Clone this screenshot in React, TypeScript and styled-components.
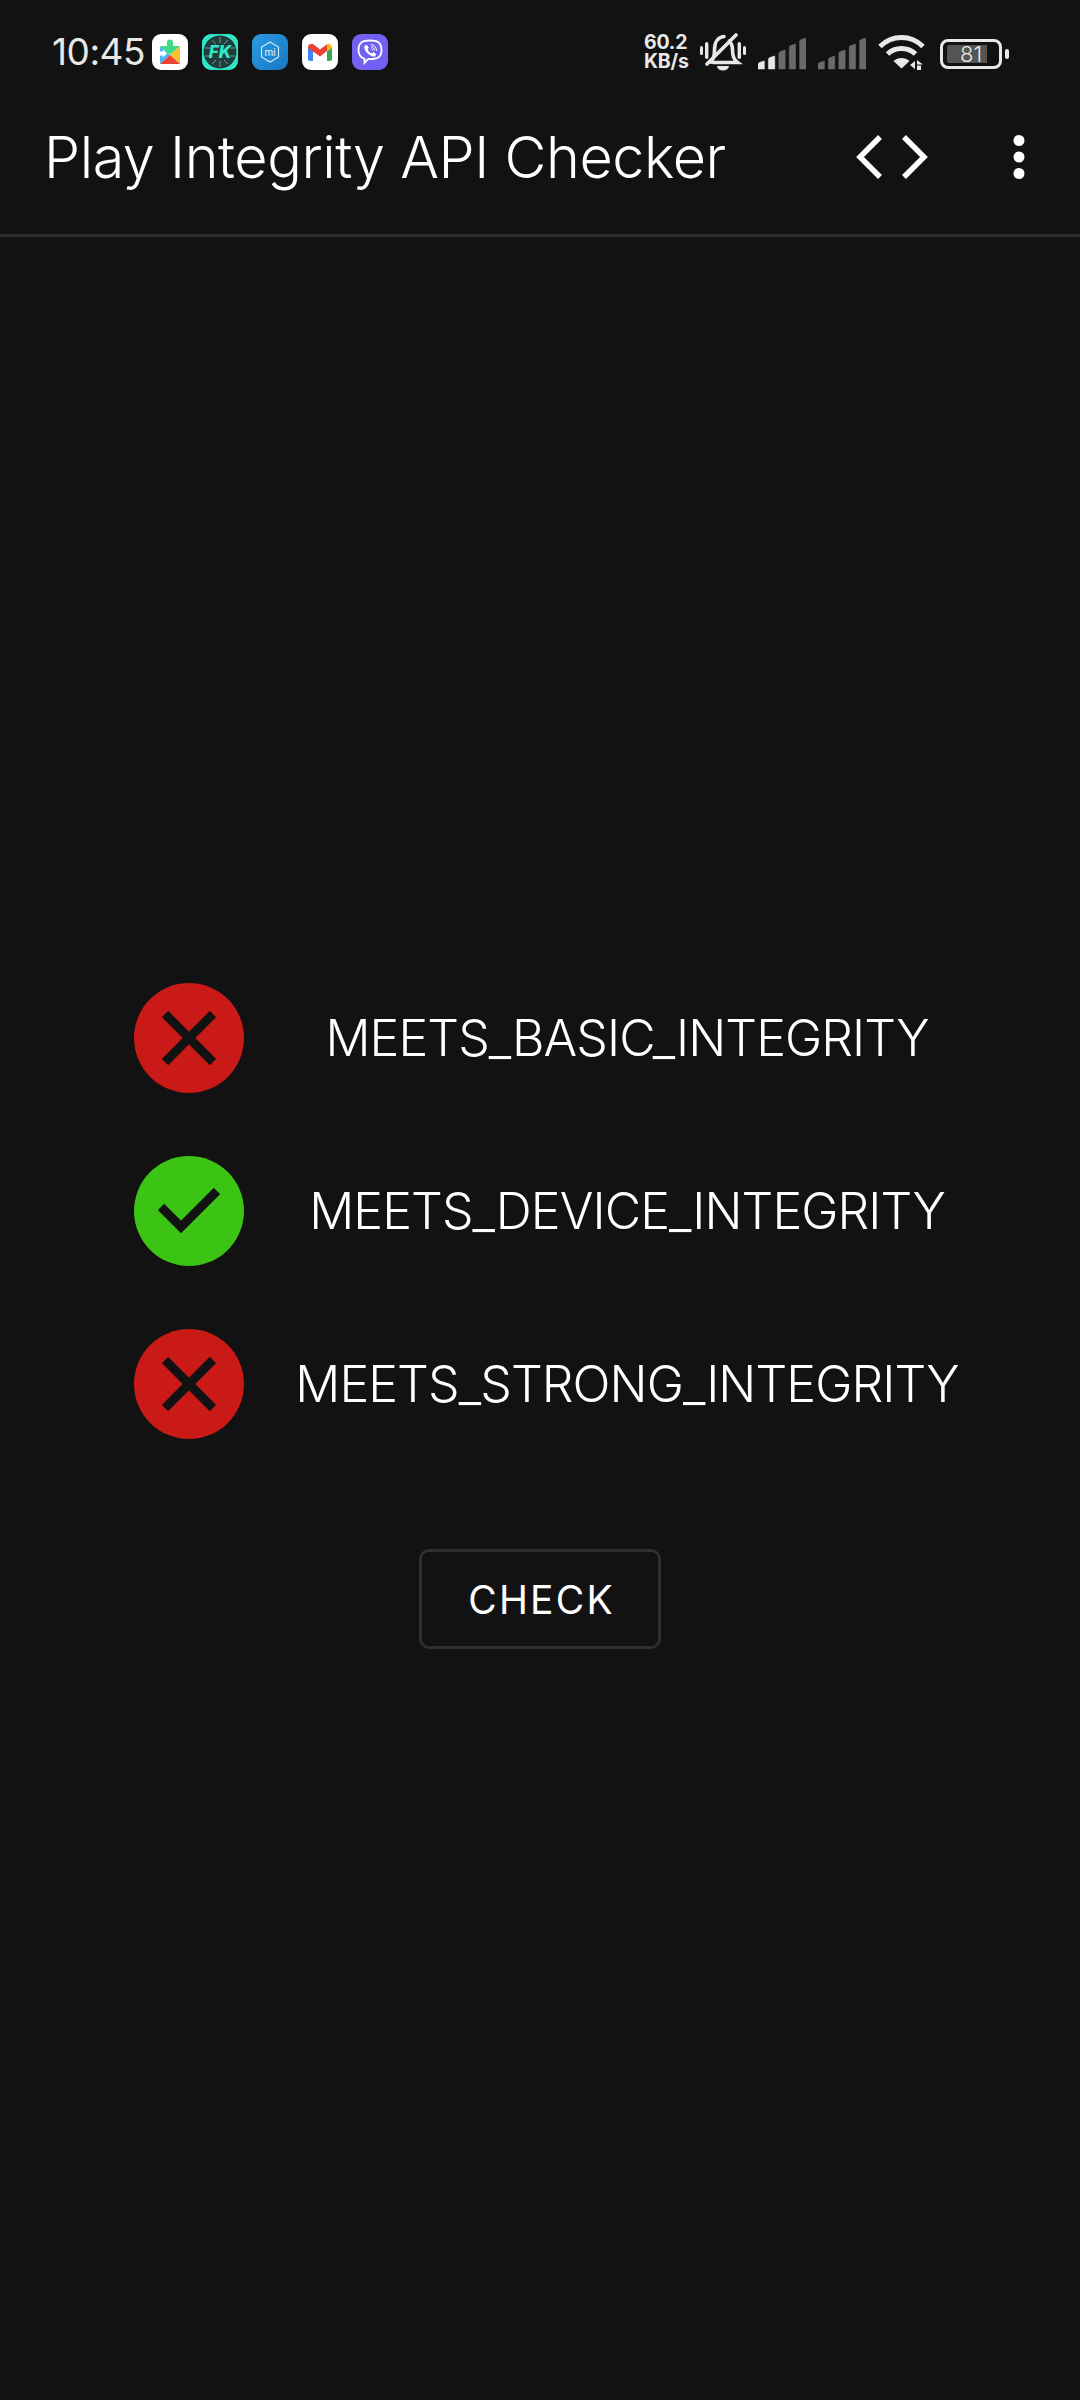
import React from 'react';
import styled, { createGlobalStyle } from 'styled-components';

const GlobalStyle = createGlobalStyle`
  html, body {
    margin: 0;
    padding: 0;
    background: #121212;
  }
  * { box-sizing: border-box; }
`;

const Screen = styled.div`
  width: 1080px;
  height: 2400px;
  background: #121212;
  color: #fff;
  font-family: Inter, "Noto Sans", sans-serif;
  overflow: hidden;
`;

const StatusBar = styled.div`
  height: 104px;
  padding: 32px 71px 0 52px;
  display: flex;
  align-items: flex-start;
  justify-content: space-between;
`;

const StatusGroup = styled.div`
  display: flex;
  align-items: center;
  height: 40px;
`;

const Clock = styled.span`
  font-size: 37px;
  line-height: 40px;
  color: #e8e8e8;
  margin-right: 7px;
  letter-spacing: -0.5px;
`;

const AppBadges = styled.div`
  display: flex;
  gap: 14px;
`;

const Badge = styled.div<{ $bg: string }>`
  width: 36px;
  height: 36px;
  border-radius: 9px;
  background: ${p => p.$bg};
  overflow: hidden;
  svg { display: block; }
`;

const NetSpeed = styled.div`
  width: 56px;
  font-size: 19.5px;
  line-height: 19px;
  font-weight: 700;
  letter-spacing: -0.2px;
  color: #e8e8e8;
  text-align: left;
`;

const Toolbar = styled.div`
  height: 133px;
  padding: 0 55px 24px 44px;
  display: flex;
  align-items: center;
  justify-content: space-between;
  border-bottom: 3px solid #2e2e2e;
`;

const Title = styled.h1`
  margin: 0;
  font-size: 57.5px;
  font-weight: 300;
  line-height: 70px;
  letter-spacing: -0.45px;
`;

const ToolbarActions = styled.div`
  display: flex;
  align-items: center;
  gap: 85px;
`;

const Content = styled.div`
  padding-top: 746px;
  display: flex;
  flex-direction: column;
  align-items: center;
`;

const CheckList = styled.div`
  width: 812px;
  display: flex;
  flex-direction: column;
  gap: 63px;
`;

const CheckRow = styled.div`
  display: flex;
  align-items: center;
  height: 110px;
`;

const StatusDot = styled.div<{ $ok: boolean }>`
  width: 110px;
  height: 110px;
  flex: none;
  border-radius: 50%;
  background: ${p => (p.$ok ? '#3cc415' : '#c91a17')};
  display: flex;
  align-items: center;
  justify-content: center;
`;

const CheckLabel = styled.div`
  flex: 1;
  min-width: 0;
  display: flex;
  justify-content: center;
  font-size: 50px;
  font-weight: 300;
  letter-spacing: -0.9px;
  white-space: nowrap;
  margin-left: 64px;
`;

const CheckButton = styled.button`
  margin-top: 110px;
  width: 242px;
  height: 100px;
  background: transparent;
  border: 3px solid #2f2f2f;
  border-radius: 10px;
  color: #fff;
  font-family: inherit;
  font-size: 39px;
  font-weight: 400;
  letter-spacing: 2.2px;
  padding: 0 0 0 3px;
`;

const CrossIcon = () => (
  <svg width="54" height="54" viewBox="0 0 54 54">
    <path d="M3 3 L51 51 M51 3 L3 51" stroke="#121212" strokeWidth="9" fill="none" />
  </svg>
);

const TickIcon = () => (
  <svg width="62" height="46" viewBox="0 0 62 46">
    <path d="M3 19 L23 39 L59 3" stroke="#121212" strokeWidth="9" fill="none" />
  </svg>
);

const PlayServicesBadge = () => (
  <Badge $bg="#fff">
    <svg width="36" height="36" viewBox="0 0 36 36">
      <path d="M8 12 L18 21 L8 30 Z" fill="#4db6f5" />
      <path d="M8 12 H15 V8.5 A3 3 0 0 1 21 8.5 V12 H28 L18 21 Z" fill="#3ddc84" />
      <path d="M28 12 V30 L18 21 Z" fill="#fbc02d" />
      <path d="M8 30 H28 L18 21 Z" fill="#ea4335" />
      <path d="M8 17.5 H11 V15.5 L15 19.5 L11 23.5 V21.5 H8 Z" fill="#fff" />
    </svg>
  </Badge>
);

const KernelBadge = () => (
  <Badge $bg="#2fe8c8">
    <svg width="36" height="36" viewBox="0 0 36 36">
      <circle cx="18" cy="18" r="16.5" fill="#1f3d3a" />
      <path
        d="M10 6 L14 10 M26 6 L22 10 M10 30 L14 26 M26 30 L22 26 M18 3 V9 M18 27 V33 M3 14 H8 M3 22 H8 M33 14 H28 M33 22 H28"
        stroke="#6f9a94"
        strokeWidth="1"
      />
      <text
        x="18"
        y="24"
        textAnchor="middle"
        fontFamily="Inter, sans-serif"
        fontSize="17"
        fontWeight="800"
        fontStyle="italic"
        fill="#2fe8c8"
      >
        FK
      </text>
    </svg>
  </Badge>
);

const MiBadge = () => (
  <Badge $bg="linear-gradient(135deg, #2a9be0, #1878c4)">
    <svg width="36" height="36" viewBox="0 0 36 36">
      <path d="M18 8 L26.5 13 V23 L18 28 L9.5 23 V13 Z" fill="none" stroke="#d5ecfb" strokeWidth="1.1" />
      <text x="18" y="21.5" textAnchor="middle" fontFamily="Inter, sans-serif" fontSize="10" fill="#eaf6fe">
        mi
      </text>
    </svg>
  </Badge>
);

const GmailBadge = () => (
  <Badge $bg="#fff">
    <svg width="36" height="36" viewBox="0 0 36 36">
      <path d="M6 13 V25 A2 2 0 0 0 8 27 H11 V16 Z" fill="#4285f4" />
      <path d="M25 16 V27 H28 A2 2 0 0 0 30 25 V13 Z" fill="#34a853" />
      <path d="M6 14 A3.6 3.6 0 0 1 11.8 10.6 L18 15.4 L25 10.2 V17 L18 22.4 L6 14 Z" fill="#ea4335" />
      <path d="M25 10.2 A3.6 3.6 0 0 1 30 14 L25 17.6 Z" fill="#fbbc04" />
    </svg>
  </Badge>
);

const ViberBadge = () => (
  <Badge $bg="#7360f2">
    <svg width="36" height="36" viewBox="0 0 36 36">
      <path
        d="M18 6.5 C24 6.5 29.5 7.5 29.5 16 C29.5 24 24.5 25.2 18 25.2 L16 25.2 L12.5 29 V24.8 C8.5 23.5 6.5 21 6.5 16 C6.5 7.5 12 6.5 18 6.5 Z"
        fill="none"
        stroke="#fff"
        strokeWidth="1.8"
      />
      <path d="M13 11.5 L15 11 L16.8 13.8 L15.6 15.4 C16.4 17.2 17.6 18.5 19.6 19.4 L21.2 18.2 L24 20 L23.4 22 C22.5 23 20.6 22.8 18 21.2 C14.6 19.2 12.4 15.8 12.3 13.4 C12.3 12.6 12.6 12 13 11.5 Z" fill="#fff" />
      <path d="M19 10.5 C22 10.8 24.4 13 24.6 16.4 M19.4 12.8 C21 13 22.3 14.2 22.4 16 M19.6 14.8 C20.2 14.9 20.6 15.3 20.6 16" fill="none" stroke="#fff" strokeWidth="1" strokeLinecap="round" />
    </svg>
  </Badge>
);

const MutedBell = () => (
  <svg width="46" height="38" viewBox="0 0 46 38" style={{ marginRight: 12 }}>
    <g fill="#e8e8e8">
      <rect x="0" y="13" width="3" height="9" rx="1.5" />
      <rect x="5" y="9" width="3.4" height="17" rx="1.7" />
      <rect x="37.6" y="9" width="3.4" height="17" rx="1.7" />
      <rect x="43" y="13" width="3" height="9" rx="1.5" />
      <path d="M17 33 H29 A6 4.5 0 0 1 17 33 Z" />
    </g>
    <path
      d="M10.5 29 C13 27 14.5 24 14.5 17 C14.5 9 18 4 24 3.5 M29.5 8 C31.5 10.5 32.5 13 32.5 17 C32.5 23 34 27 37.5 29.5 H13"
      fill="none"
      stroke="#e8e8e8"
      strokeWidth="3.6"
      strokeLinecap="round"
    />
    <path d="M7 31 L36 2" stroke="#e8e8e8" strokeWidth="3.6" strokeLinecap="round" />
  </svg>
);

const SignalBars = ({ active, right }: { active: number; right: number }) => (
  <svg width="48" height="32" viewBox="0 0 48 32" style={{ marginRight: right, marginTop: 4 }}>
    {[23, 18, 12, 6, 0].map((top, i) => (
      <path
        key={i}
        d={`M${i * 10.4} 31 V${top + 3} Q${i * 10.4} ${top + 1.5} ${i * 10.4 + 6.4} ${top} V31 Z`}
        fill={i < active ? '#e8e8e8' : '#6a6a6a'}
        stroke={i < active ? '#e8e8e8' : '#6a6a6a'}
        strokeWidth="0.5"
      />
    ))}
  </svg>
);

const WifiIcon = () => (
  <svg width="48" height="38" viewBox="0 0 48 38" style={{ marginRight: 14 }}>
    <g fill="none" stroke="#e8e8e8" strokeWidth="5">
      <path d="M2 13.5 C14 1.5 33 1.5 45 13.5" />
      <path d="M9.5 21 C17 13.5 30 13.5 37.5 21" />
    </g>
    <path d="M15.5 28 C20 24 27 24 31.5 28 L23.5 35.5 Z" fill="#e8e8e8" />
    <path d="M37 28 V36 L32 32 Z M39 27 L45 31.5 H39 Z M39 32.5 H43 V37 H39 Z" fill="#e8e8e8" />
  </svg>
);

const BatteryIcon = () => (
  <svg width="69" height="30" viewBox="0 0 69 30" style={{ marginTop: 4 }}>
    <rect x="1.5" y="1.5" width="59" height="27" rx="6.5" fill="none" stroke="#e8e8e8" strokeWidth="3" />
    <path d="M7 8 A2 2 0 0 1 9 6 H47 V24 H9 A2 2 0 0 1 7 22 Z" fill="#555" />
    <rect x="65" y="10" width="4" height="10" rx="2" fill="#e8e8e8" />
    <text x="31" y="23" textAnchor="middle" fontSize="22" fontWeight="300" fontFamily="Inter, sans-serif" fill="#e8e8e8">
      81
    </text>
  </svg>
);

const CodeIcon = () => (
  <svg width="72" height="44" viewBox="0 0 72 44">
    <path d="M24 2 L4 22 L24 42 M48 2 L68 22 L48 42" fill="none" stroke="#fff" strokeWidth="5.5" />
  </svg>
);

const MoreIcon = () => (
  <svg width="12" height="44" viewBox="0 0 12 44">
    <circle cx="6" cy="5.5" r="5.5" fill="#fff" />
    <circle cx="6" cy="22" r="5.5" fill="#fff" />
    <circle cx="6" cy="38.5" r="5.5" fill="#fff" />
  </svg>
);

const checks = [
  { name: 'MEETS_BASIC_INTEGRITY', ok: false },
  { name: 'MEETS_DEVICE_INTEGRITY', ok: true },
  { name: 'MEETS_STRONG_INTEGRITY', ok: false },
];

export default function App() {
  return (
    <Screen>
      <GlobalStyle />
      <StatusBar>
        <StatusGroup>
          <Clock>10:45</Clock>
          <AppBadges>
            <PlayServicesBadge />
            <KernelBadge />
            <MiBadge />
            <GmailBadge />
            <ViberBadge />
          </AppBadges>
        </StatusGroup>
        <StatusGroup>
          <NetSpeed>60.2<br />KB/s</NetSpeed>
          <MutedBell />
          <SignalBars active={2} right={12} />
          <SignalBars active={0} right={12} />
          <WifiIcon />
          <BatteryIcon />
        </StatusGroup>
      </StatusBar>
      <Toolbar>
        <Title>Play Integrity API Checker</Title>
        <ToolbarActions>
          <CodeIcon />
          <MoreIcon />
        </ToolbarActions>
      </Toolbar>
      <Content>
        <CheckList>
          {checks.map(c => (
            <CheckRow key={c.name}>
              <StatusDot $ok={c.ok}>{c.ok ? <TickIcon /> : <CrossIcon />}</StatusDot>
              <CheckLabel>{c.name}</CheckLabel>
            </CheckRow>
          ))}
        </CheckList>
        <CheckButton>CHECK</CheckButton>
      </Content>
    </Screen>
  );
}
